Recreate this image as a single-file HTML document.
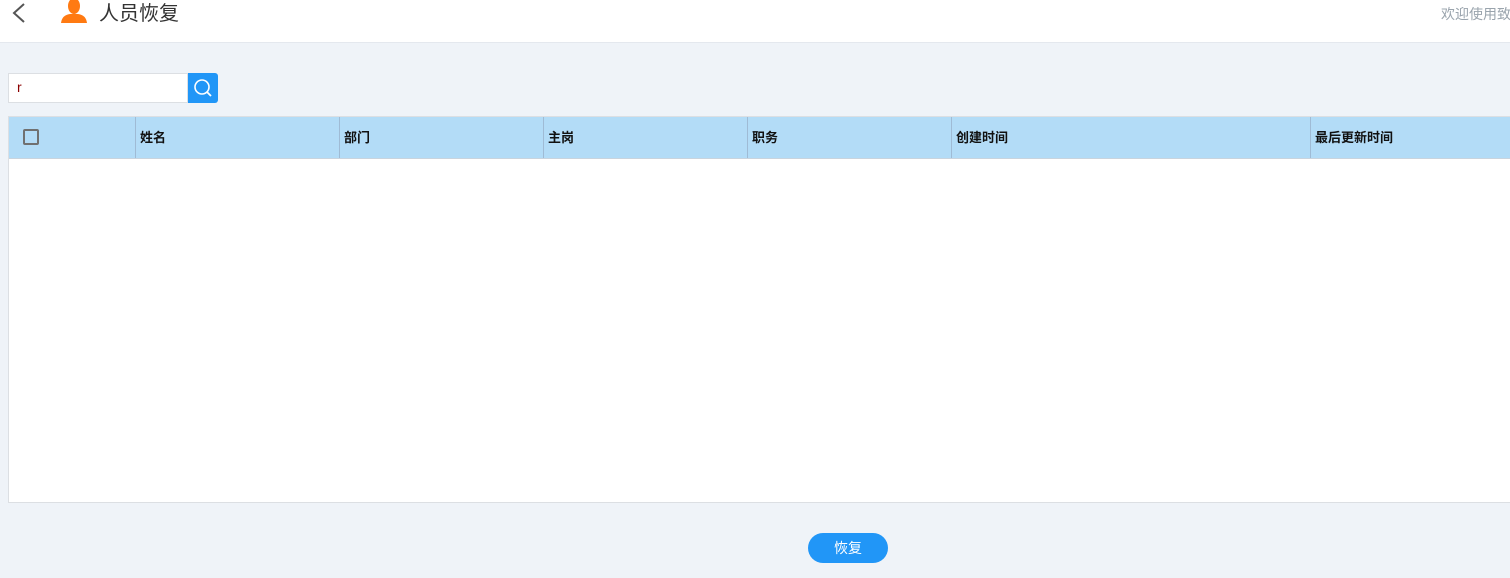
<!DOCTYPE html>
<html><head><meta charset="utf-8"><style>
*{margin:0;padding:0;box-sizing:border-box}
body{width:1510px;height:578px;overflow:hidden;background:#eff3f8;font-family:"Liberation Sans","Noto Sans CJK SC",sans-serif;position:relative}
.hdr{position:absolute;left:0;top:0;width:1510px;height:43px;background:#fff;border-bottom:1px solid #e4e8ee}
.title{position:absolute;left:99px;top:-3px;font-size:20px;color:#333}
.welcome{position:absolute;left:1441px;top:4px;font-size:14px;color:#9aa4ad;white-space:nowrap}
.inp{position:absolute;left:8px;top:73px;width:180px;height:30px;background:#fff;border:1px solid #dcdfe3;font-size:14px;color:#8b0000;padding:5px 8px}
.sbtn{position:absolute;left:188px;top:73px;width:30px;height:30px;background:#2196f7;border-radius:0 3px 3px 0}
.tbl{position:absolute;left:8px;top:116px;width:1510px;height:387px;background:#fff;border:1px solid #dcdfe3}
.th{position:absolute;left:0;top:0;width:100%;height:42px;background:#b3dcf7;border-bottom:1px solid #c9d4de}
.col{position:absolute;top:0;height:41px;border-left:1px solid #9fbbd5;font-size:13px;font-weight:bold;line-height:41px;padding-left:4px;color:#111}
.cb{position:absolute;left:14px;top:12px;width:16px;height:16px;border:2px solid #707070;border-radius:2px}
.btn{position:absolute;left:808px;top:533px;width:80px;height:30px;background:#2196f7;border-radius:15px;color:#fff;font-size:14px;text-align:center;line-height:30px}
</style></head><body>
<div class="hdr">
<svg style="position:absolute;left:10px;top:2px" width="18" height="22" viewBox="0 0 18 22"><path d="M14 2 L4 11 L14 20" fill="none" stroke="#555" stroke-width="2"/></svg>
<svg style="position:absolute;left:60px;top:0" width="28" height="23" viewBox="0 0 28 23"><ellipse cx="14" cy="6" rx="6" ry="8" fill="#ff7a12"/><path d="M1 23 Q2 15 10 14 L18 14 Q26 15 27 23Z" fill="#ff7a12"/></svg>
<div class="title">人员恢复</div>
<div class="welcome">欢迎使用致远</div>
</div>
<div class="inp">r</div>
<div class="sbtn"><svg width="30" height="30" viewBox="0 0 30 30"><circle cx="14" cy="14" r="7" fill="none" stroke="#fff" stroke-width="1.6"/><path d="M19 19 L23 23" stroke="#fff" stroke-width="1.8"/></svg></div>
<div class="tbl"><div class="th">
<div class="cb"></div>
<div class="col" style="left:126px">姓名</div>
<div class="col" style="left:330px">部门</div>
<div class="col" style="left:534px">主岗</div>
<div class="col" style="left:738px">职务</div>
<div class="col" style="left:942px">创建时间</div>
<div class="col" style="left:1301px">最后更新时间</div>
</div></div>
<div class="btn">恢复</div>
</body></html>
